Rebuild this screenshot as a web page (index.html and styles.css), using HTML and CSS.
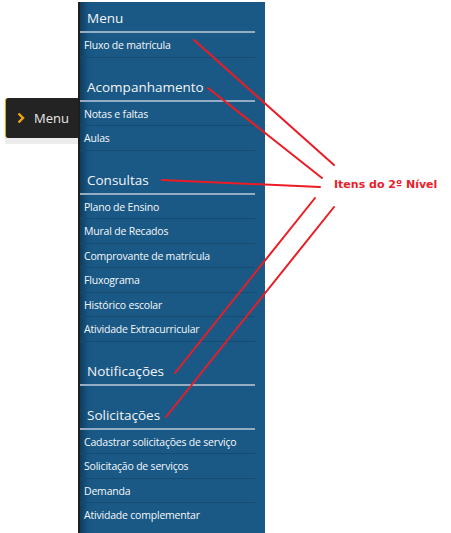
FILE: index.html
```html
<!DOCTYPE html>
<html lang="pt">
<head>
<meta charset="utf-8">
<title>Menu</title>
<link rel="stylesheet" href="styles.css">
</head>
<body>
<div class="page">
  <div class="toggle">
    <div class="toggle-btn">
      <svg class="chev" width="8" height="12" viewBox="0 0 8 12"><path d="M1.5 1.5 L6 6 L1.5 10.5" fill="none" stroke="#f3a60c" stroke-width="2.4"/></svg>
      <span class="toggle-label">Menu</span>
    </div>
    <div class="toggle-shadow"></div>
  </div>
  <nav class="panel">
    <div class="heading first">Menu</div>
    <div class="item">Fluxo de matrícula</div>
    <div class="heading">Acompanhamento</div>
    <div class="item">Notas e faltas</div>
    <div class="item">Aulas</div>
    <div class="heading">Consultas</div>
    <div class="item">Plano de Ensino</div>
    <div class="item">Mural de Recados</div>
    <div class="item">Comprovante de matrícula</div>
    <div class="item">Fluxograma</div>
    <div class="item">Histórico escolar</div>
    <div class="item">Atividade Extracurricular</div>
    <div class="heading">Notificações</div>
    <div class="heading">Solicitações</div>
    <div class="item">Cadastrar solicitações de serviço</div>
    <div class="item">Solicitação de serviços</div>
    <div class="item">Demanda</div>
    <div class="item last">Atividade complementar</div>
  </nav>
</div>
<svg class="annot" width="451" height="533" viewBox="0 0 451 533">
  <g stroke="#ec1c24" stroke-width="2" fill="none" stroke-linecap="round">
    <line x1="194" y1="40" x2="334" y2="165"/>
    <line x1="208" y1="88" x2="322" y2="178"/>
    <line x1="162" y1="180" x2="320" y2="187"/>
    <line x1="315" y1="198" x2="175" y2="373"/>
    <line x1="334" y1="207" x2="166" y2="417"/>
  </g>
</svg>
<div class="annot-label">Itens do 2º Nível</div>
</body>
</html>
```
FILE: styles.css
```css
html, body {
  margin: 0;
  padding: 0;
  background: #ffffff;
}
body {
  width: 451px;
  height: 533px;
  overflow: hidden;
  position: relative;
  font-family: "Open Sans", "Noto Sans", sans-serif;
}
.page {
  display: flex;
  align-items: flex-start;
  padding: 2px 0 0 5px;
}
.toggle {
  margin-top: 96px;
  width: 73px;
}
.toggle-btn {
  height: 40px;
  background: #232323;
  border-left: 1px solid #f0a30a;
  border-radius: 3px 0 0 3px;
  display: flex;
  align-items: center;
  padding-left: 11px;
  box-sizing: border-box;
}
.chev {
  display: block;
}
.toggle-label {
  margin-left: 9px;
  color: #e6e6e6;
  font-size: 13px;
  font-family: "Open Sans", sans-serif;
}
.toggle-shadow {
  height: 6px;
  background: #ececec;
}
.panel {
  width: 175px;
  height: 531px;
  padding-right: 10px;
  background: linear-gradient(to right, #0f3d5f 0px, #185582 8px, #1a5985 14px, #1a5985 100%);
  border-left: 2px solid #1e1e1e;
  box-sizing: content-box;
  display: flex;
  flex-direction: column;
}
.heading {
  padding: 21px 0 5px 7px;
  line-height: 16px;
  font-size: 13.5px;
  color: #f2f4f6;
  border-bottom: 2px solid #94adc2;
}
.heading.first {
  padding-top: 8px;
  padding-bottom: 5px;
}
.item {
  padding: 5px 0 4.5px 4px;
  line-height: 14px;
  font-size: 10.5px;
  color: #f4f7fa;
  border-bottom: 1px solid #154a71;
  letter-spacing: -0.2px;
}
.item.last {
  border-bottom: none;
}
.annot {
  position: absolute;
  left: 0;
  top: 0;
  pointer-events: none;
}
.annot-label {
  position: absolute;
  left: 334px;
  top: 177px;
  color: #e8202a;
  font-family: "DejaVu Sans", sans-serif;
  font-weight: bold;
  font-size: 11px;
  line-height: 16px;
  letter-spacing: 0;
}
```
